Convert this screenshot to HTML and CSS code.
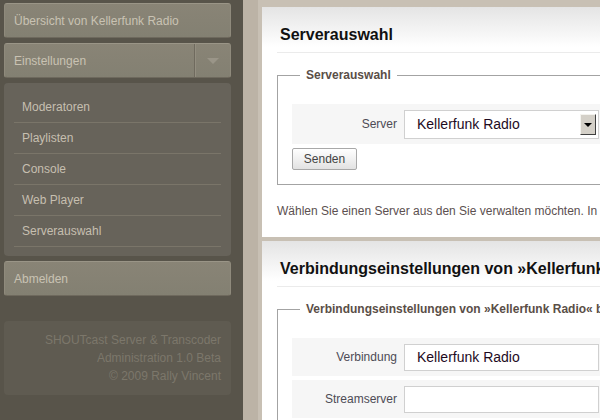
FILE: index.html
```html
<!DOCTYPE html>
<html lang="de">
<head>
    <meta charset="UTF-8">
    <title>SHOUTcast Administration</title>
    <link rel="stylesheet" href="styles.css">
</head>
<body>

<!-- Sidebar -->
<div class="sidebar">
    <a class="nav-btn" href="#">Übersicht von Kellerfunk Radio</a>
    <a class="nav-btn nav-drop" href="#">
        <span class="nav-label">Einstellungen</span>
        <span class="nav-arrow"></span>
    </a>
    <div class="submenu">
        <a href="#">Moderatoren</a>
        <a href="#">Playlisten</a>
        <a href="#">Console</a>
        <a href="#">Web Player</a>
        <a href="#">Serverauswahl</a>
    </div>
    <a class="nav-btn" href="#">Abmelden</a>
    <div class="footer">
        SHOUTcast Server &amp; Transcoder<br>
        Administration 1.0 Beta<br>
        © 2009 Rally Vincent
    </div>
</div>

<!-- Main Content -->
<div class="content">
    <div class="frame">
        <div class="panel">
            <h2>Serverauswahl</h2>
            <fieldset>
                <legend>Serverauswahl</legend>
                <div class="row row-tall">
                    <label>Server</label>
                    <div class="field select">
                        <span>Kellerfunk Radio</span>
                        <span class="drop-btn"></span>
                    </div>
                </div>
                <button class="btn">Senden</button>
            </fieldset>
            <p class="hint">Wählen Sie einen Server aus den Sie verwalten möchten. In der Liste</p>
        </div>
        <div class="panel">
            <h2>Verbindungseinstellungen von »Kellerfunk Radio«</h2>
            <fieldset>
                <legend>Verbindungseinstellungen von »Kellerfunk Radio« bearbeiten</legend>
                <div class="row">
                    <label>Verbindung</label>
                    <div class="field">Kellerfunk Radio</div>
                </div>
                <div class="row">
                    <label>Streamserver</label>
                    <div class="field"></div>
                </div>
            </fieldset>
        </div>
    </div>
</div>

</body>
</html>
```

FILE: styles.css
```css
html, body {
    height: 100%;
}
body {
    font-family: "Liberation Sans", Arial, sans-serif;
    font-size: 12px;
    margin: 0;
    padding: 0;
    display: flex;
    width: 600px;
    overflow: hidden;
    background-color: #58544a;
}
.sidebar {
    flex: 0 0 227px;
    padding: 3px 12px 0 4px;
    display: flex;
    flex-direction: column;
}
.nav-btn {
    display: flex;
    align-items: center;
    height: 33px;
    padding: 0 9px;
    margin-bottom: 5px;
    border: 1px solid #8f8a7c;
    border-top-color: #9a9587;
    border-bottom-color: #6e695d;
    border-radius: 3px;
    background: linear-gradient(#898476, #838072);
    color: #c9c2b3;
    text-decoration: none;
}
.nav-drop {
    padding-right: 0;
}
.nav-label {
    flex: 1;
}
.nav-arrow {
    position: relative;
    width: 35px;
    height: 100%;
    border-left: 1px solid #6f6a5e;
    box-shadow: inset 1px 0 0 #938e80;
}
.nav-arrow::after {
    content: "";
    position: absolute;
    left: 12px;
    top: 14px;
    border-left: 6px solid transparent;
    border-right: 6px solid transparent;
    border-top: 6px solid #9a9588;
}
.submenu {
    background-color: #67635a;
    border-radius: 4px;
    padding: 9px 10px 9px 10px;
    margin-bottom: 5px;
}
.submenu a {
    display: block;
    height: 30px;
    line-height: 30px;
    padding-left: 8px;
    border-bottom: 1px solid #7a7569;
    color: #c6bfb0;
    text-decoration: none;
}
.footer {
    margin-top: 20px;
    padding: 10px 10px 10px 0;
    background-color: #5f5b51;
    border-radius: 4px;
    text-align: right;
    line-height: 18px;
    color: #7c776b;
}
.content {
    flex: 0 0 auto;
    background-color: #bcb3a6;
    padding-left: 15px;
}
.frame {
    border-left: 4px solid #c8c0b4;
    background-color: #c8c0b4;
    padding-top: 7px;
    display: flex;
    flex-direction: column;
    gap: 4px;
}
.panel {
    width: 380px;
    padding: 0 0 0 15px;
    overflow: hidden;
    white-space: nowrap;
    background: linear-gradient(#e4e4e4, #ffffff 40px);
}
.panel:first-child {
    height: 230px;
}
.panel:last-child {
    height: 200px;
}
h2 {
    margin: 0;
    padding: 18px 0 8px 3px;
    font-size: 16px;
    line-height: 19px;
    color: #111;
    border-bottom: 1px solid #ebebeb;
}
fieldset {
    margin: 15px 0 0 0;
    padding: 22px 0 14px 14px;
    border: 1px solid #a3a3a3;
}
legend {
    margin-left: 8px;
    padding: 0 6px;
    font-weight: bold;
    color: #5a4e47;
}
.row {
    display: flex;
    align-items: center;
    gap: 7px;
    height: 38px;
    margin-bottom: 4px;
    background-color: #f6f6f6;
}
.row-tall {
    height: 40px;
}
.row label {
    width: 105px;
    text-align: right;
    color: #4d4b55;
}
.field {
    display: flex;
    align-items: center;
    box-sizing: border-box;
    width: 195px;
    height: 27px;
    padding-left: 12px;
    border: 1px solid #d0d0d0;
    background-color: #fff;
    font-size: 14px;
    color: #1e0b1e;
}
.select {
    height: 29px;
}
.select span:first-child {
    flex: 1;
}
.drop-btn {
    position: relative;
    width: 16px;
    height: 21px;
    margin-right: 2px;
    box-sizing: border-box;
    background-color: #d4d0c8;
    border: 1px solid;
    border-color: #f4f3ef #404040 #404040 #f4f3ef;
}
.drop-btn::after {
    content: "";
    position: absolute;
    left: 3px;
    top: 8px;
    border-left: 4px solid transparent;
    border-right: 4px solid transparent;
    border-top: 4px solid #000;
}
.btn {
    display: block;
    width: 65px;
    height: 22px;
    padding: 0;
    border: 1px solid #a8a8a8;
    border-radius: 2px;
    background: linear-gradient(#ffffff, #e2e2e2);
    font-family: "Liberation Sans", Arial, sans-serif;
    font-size: 12px;
    color: #444;
}
.hint {
    margin: 19px 0 0 0;
    color: #5c5050;
}
```
